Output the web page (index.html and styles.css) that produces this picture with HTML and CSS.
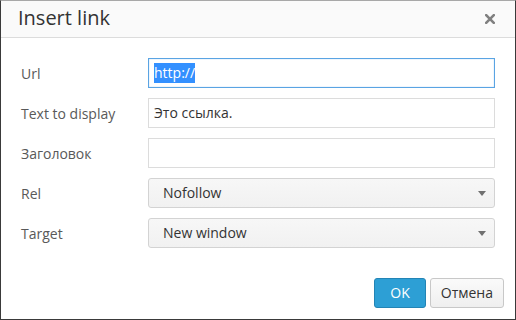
FILE: index.html
```html
<!DOCTYPE html>
<html lang="ru">
<head>
<meta charset="utf-8">
<title>Insert link</title>
<link rel="stylesheet" href="styles.css">
</head>
<body>
<div class="dialog">
  <div class="head">
    <div class="title">Insert link</div>
    <svg class="close" width="10" height="10" viewBox="0 0 10 10"><path d="M1.2 1.2 L8.8 8.8 M8.8 1.2 L1.2 8.8" stroke="#808080" stroke-width="2.6" stroke-linecap="square"/></svg>
  </div>
  <div class="form">
    <div class="label">Url</div>
    <div class="field focus"><span class="sel">http://</span></div>
    <div class="label">Text to display</div>
    <div class="field">Это ссылка.</div>
    <div class="label">Заголовок</div>
    <div class="field"></div>
    <div class="label">Rel</div>
    <div class="select"><span>Nofollow</span><i class="caret"></i></div>
    <div class="label">Target</div>
    <div class="select"><span>New window</span><i class="caret"></i></div>
  </div>
  <div class="foot">
    <div class="btn primary">OK</div>
    <div class="btn">Отмена</div>
  </div>
</div>
</body>
</html>
```

FILE: styles.css
```css
html, body {
  margin: 0;
  padding: 0;
  background: #fff;
}
.dialog {
  width: 516px;
  height: 320px;
  box-sizing: border-box;
  border: 1px solid #3a3a3a;
  border-top-color: #a8a8a8;
  display: flex;
  flex-direction: column;
  font-family: "Open Sans", "Noto Sans", sans-serif;
  background: #fff;
}
.head {
  height: 36px;
  background: #fafafa;
  border-bottom: 1px solid #dcdcdc;
  display: flex;
  align-items: center;
  justify-content: space-between;
  padding: 0 20px 0 17px;
}
.title {
  font-size: 20px;
  color: #333;
  line-height: 24px;
  margin-top: -2px;
}
.close {
  display: block;
  margin-top: -1px;
}
.form {
  display: grid;
  grid-template-columns: 127px 347px;
  row-gap: 10px;
  padding: 20px 20px 0 20px;
  align-items: center;
}
.label {
  font-size: 14px;
  color: #595959;
  padding-top: 1px;
}
.field {
  height: 30px;
  box-sizing: border-box;
  border: 1px solid #dcdcdc;
  background: #fff;
  font-size: 14px;
  color: #333;
  line-height: 28px;
  padding: 0 5px;
  white-space: nowrap;
}
.field.focus {
  border-color: #5aa4e3;
  box-shadow: inset 0 0 1px #5aa4e3;
}
.sel {
  background: #3390ff;
  color: #fff;
  display: inline-block;
  line-height: 20px;
  vertical-align: middle;
  margin-top: -2px;
}
.select {
  height: 30px;
  box-sizing: border-box;
  border: 1px solid #d3d3d3;
  border-radius: 3px;
  background: linear-gradient(#f7f7f7, #f1f1f1);
  display: flex;
  align-items: center;
  justify-content: space-between;
  padding: 0 6px 0 14px;
  font-size: 14px;
  color: #333;
}
.select span {
  margin-top: -2px;
}
.caret {
  width: 0;
  height: 0;
  border-left: 4px solid transparent;
  border-right: 4px solid transparent;
  border-top: 5px solid #707070;
  margin-right: 2px;
}
.foot {
  margin-top: auto;
  display: flex;
  justify-content: flex-end;
  gap: 4px;
  padding: 0 11px 11px 0;
}
.btn {
  height: 30px;
  box-sizing: border-box;
  border: 1px solid #c8c8c8;
  border-radius: 3px;
  background: linear-gradient(#fafafa, #efefef);
  font-size: 14px;
  color: #333;
  line-height: 28px;
  padding: 0 10px;
}
.btn.primary {
  background: #2d9fd5;
  border-color: #2384b5;
  color: #fff;
  padding: 0 15px;
}
```
